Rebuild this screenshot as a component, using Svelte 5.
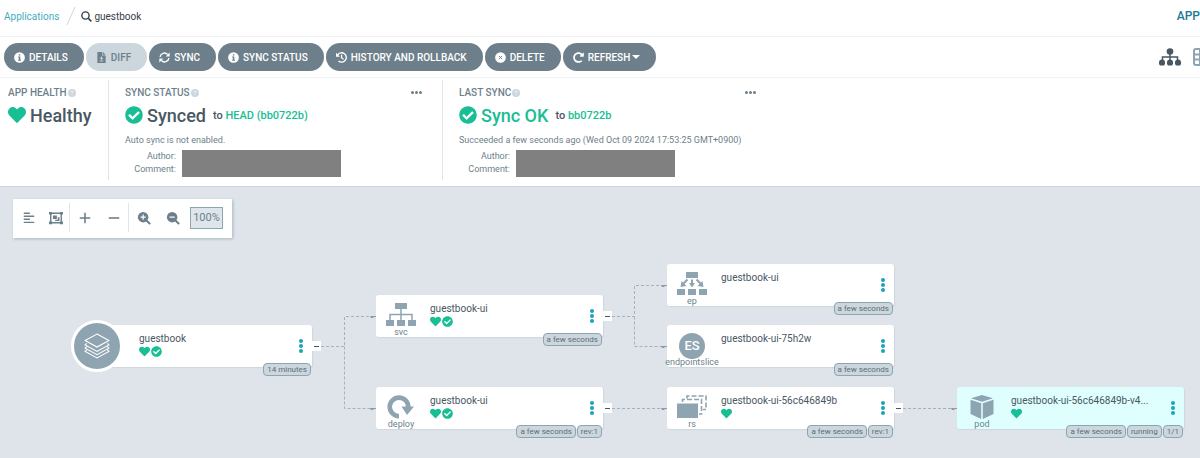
<script lang="ts">
  type Node = {
    kind: string;
    name: string;
    x: number;
    y: number;
    healthy?: boolean;
    synced?: boolean;
    expandable?: boolean;
    selected?: boolean;
    tags: string[];
  };

  const actions = [
    { icon: "info", label: "Details" },
    { icon: "diff", label: "Diff", disabled: true },
    { icon: "sync", label: "Sync" },
    { icon: "info", label: "Sync Status" },
    { icon: "history", label: "History and rollback" },
    { icon: "times", label: "Delete" },
    { icon: "redo", label: "Refresh", menu: true },
  ];

  const nodes: Node[] = [
    { kind: "app", name: "guestbook", x: 85, y: 138, healthy: true, synced: true, expandable: true, tags: ["14 minutes"] },
    { kind: "svc", name: "guestbook-ui", x: 376, y: 108, healthy: true, synced: true, expandable: true, tags: ["a few seconds"] },
    { kind: "deploy", name: "guestbook-ui", x: 376, y: 200, healthy: true, synced: true, expandable: true, tags: ["a few seconds", "rev:1"] },
    { kind: "ep", name: "guestbook-ui", x: 667, y: 77, tags: ["a few seconds"] },
    { kind: "endpointslice", name: "guestbook-ui-75h2w", x: 667, y: 138, tags: ["a few seconds"] },
    { kind: "rs", name: "guestbook-ui-56c646849b", x: 667, y: 200, healthy: true, expandable: true, tags: ["a few seconds", "rev:1"] },
    { kind: "pod", name: "guestbook-ui-56c646849b-v4...", x: 957, y: 200, healthy: true, selected: true, tags: ["a few seconds", "running", "1/1"] },
  ];

  const edges = [
    "M321 159.500H344.500V129.500H376",
    "M344.500 159.500V221.500H376",
    "M612 129.500H634.500V98.500H667",
    "M634.500 129.500V159.500H667",
    "M612 221.500H667",
    "M903 221.500H957",
  ];
  const arrows = [
    [376, 129],
    [376, 221],
    [667, 98],
    [667, 159],
    [667, 221],
    [957, 221],
  ];

  let zoom = $state("100%");
</script>

{#snippet heart()}
  <svg class="heart" viewBox="0 0 512 512" aria-label="Healthy">
    <path d="M462.300 62.600C407.500 15.900 326 24.300 275.700 76.200L256 96.500l-19.700-20.300C186.100 24.300 104.500 15.900 49.700 62.600c-62.800 53.600-66.100 149.800-9.900 207.900l193.500 199.800c12.500 12.900 32.800 12.900 45.300 0l193.500-199.800c56.300-58.100 53-154.300-9.800-207.900z" />
  </svg>
{/snippet}

{#snippet check()}
  <svg class="check" viewBox="0 0 512 512" aria-label="Synced">
    <path d="M504 256c0 137-111 248-248 248S8 393 8 256 119 8 256 8s248 111 248 248zM227.300 387.300l184-184c6.200-6.200 6.200-16.400 0-22.600l-22.600-22.600c-6.300-6.300-16.400-6.300-22.700 0L216 308.100l-70-70c-6.300-6.300-16.400-6.300-22.700 0l-22.600 22.600c-6.200 6.200-6.200 16.400 0 22.600l104 104c6.300 6.300 16.400 6.300 22.600 0z" />
  </svg>
{/snippet}

{#snippet help()}
  <svg class="help" viewBox="0 0 16 16">
    <circle cx="8" cy="8" r="8" />
    <path d="M5.500 6.200q.2-2.200 2.600-2.200 2.400 0 2.400 2 0 1.300-2.400 2.600v.8M8.100 11v1.600" fill="none" stroke="#fff" stroke-width="1.200" />
  </svg>
{/snippet}

{#snippet actionIcon(name: string)}
  {#if name === "info"}
    <svg viewBox="0 0 16 16">
      <circle cx="8" cy="8" r="7.800" />
      <path d="M7 3.200h2.200v2H7zM6 6.600h3.200v4.600h1v1.500H6v-1.500h1V8.100H6z" fill="#6d7f8b" />
    </svg>
  {:else if name === "diff"}
    <svg viewBox="0 0 16 16">
      <path d="M2 0h7v5h5v11H2zM10 0l4 4h-4z" />
      <path d="M8 6.500v5M5.500 9h5M5.500 13h5" stroke="#ccd6dd" stroke-width="1.400" />
    </svg>
  {:else if name === "sync"}
    <svg viewBox="0 0 16 16">
      <path d="M1.500 7a6.500 6.500 0 0 1 11-3.500M14.500 9a6.500 6.500 0 0 1-11 3.500" fill="none" stroke="currentColor" stroke-width="2" />
      <path d="M15.500.800V6.500H9.800zM.500 15.200V9.500h5.700z" />
    </svg>
  {:else if name === "history"}
    <svg viewBox="0 0 16 16">
      <path d="M2.500 4.200A6.800 6.800 0 1 1 3.600 13" fill="none" stroke="currentColor" stroke-width="2" />
      <path d="M0 1v5.800h5.800zM7.200 4h1.800v4l2.500 1.800-1 1.400-3.300-2.400z" />
    </svg>
  {:else if name === "times"}
    <svg viewBox="0 0 16 16">
      <circle cx="8" cy="8" r="7.800" />
      <path d="M5.800 5.800l4.400 4.400M10.200 5.800l-4.400 4.400" stroke="#6d7f8b" stroke-width="1.400" />
    </svg>
  {:else}
    <svg viewBox="0 0 512 512">
      <path d="M256.500 8c66.200.1 126.400 26.200 170.800 68.700L463 41c15.100-15.100 41-4.400 41 17v134c0 13.300-10.700 24-24 24H346c-21.400 0-32.100-25.900-17-41l41.700-41.700C339.900 104.400 300 88.400 257.500 88 165.100 87.200 87.200 162 88 257.400 88.800 348 162.200 424 256 424c41.100 0 80-14.700 110.600-41.600 4.800-4.100 12-3.900 16.400.6l39.700 39.700c4.800 4.800 4.600 12.800-.5 17.400C378.200 479.800 320 504 256 504 119 504 8 393 8 256S119.600 7.800 256.500 8z" />
    </svg>
  {/if}
{/snippet}

{#snippet kindIcon(kind: string)}
  {#if kind === "svc"}
    <svg viewBox="0 0 30 24">
      <path d="M9 0h12v6H9zM0 17h8v6H0zM11 17h8v6h-8zM22 17h8v6h-8z" />
      <path d="M15 6v11M4 17v-5.500h22V17" fill="none" stroke="currentColor" stroke-width="1.500" />
    </svg>
  {:else if kind === "ep"}
    <svg viewBox="0 0 30 24">
      <path d="M9 0h12v6H9zM0 17h8v6H0zM11 17h8v6h-8zM22 17h8v6h-8z" />
      <path d="M10.500 7.500l-4 4M15 7.500V12M19.500 7.500l4 4" fill="none" stroke="currentColor" stroke-width="2" />
      <path d="M3.500 15l1-6 5 5zM12 11h6l-3 4.500zM26.500 15l-1-6-5 5z" />
    </svg>
  {:else if kind === "deploy"}
    <svg viewBox="0 0 30 24">
      <path d="M13 21.200A9.300 9.300 0 1 1 22.300 12" fill="none" stroke="currentColor" stroke-width="4.600" />
      <path d="M15.500 11.500H28L21 20z" />
    </svg>
  {:else if kind === "rs"}
    <svg viewBox="0 0 30 24">
      <path d="M0 8.500h21V23H0z" />
      <path d="M5.500 7V4.500h19V19H22M10 3.500V1h19v13.500h-3" fill="none" stroke="currentColor" stroke-width="1.600" stroke-dasharray="5 2" />
    </svg>
  {:else if kind === "pod"}
    <svg viewBox="0 0 30 24">
      <path d="M15 0l11 3.300L15 6.800 4 3.300zM3.500 4.800l10.700 3.400V24L3.500 19zM26.500 4.800L15.800 8.200V24l10.700-5z" />
    </svg>
  {/if}
{/snippet}

<div class="page">
  <header class="breadcrumbs">
    <nav>
      <a href="#applications">Applications</a>
      <svg class="slash" viewBox="0 0 10 18"><path d="M1 18L9 0" stroke="#ccd6dd" /></svg>
      <svg class="search" viewBox="0 0 16 16">
        <circle cx="6.500" cy="6.500" r="5.300" fill="none" stroke="currentColor" stroke-width="2" />
        <path d="M10.500 10.500l4.500 4.500" stroke="currentColor" stroke-width="2.400" />
      </svg>
      <span>guestbook</span>
    </nav>
    <span class="view-title">APP</span>
  </header>

  <div class="toolbar">
    <div class="actions">
      {#each actions as action}
        <button class="action" disabled={action.disabled}>
          {@render actionIcon(action.icon)}
          <span>{action.label}</span>
          {#if action.menu}<i class="caret"></i>{/if}
        </button>
      {/each}
    </div>
    <div class="views">
      <button class="view active" aria-label="Tree">
        <svg viewBox="0 0 22 18">
          <path d="M11 4v9M3.500 13V9h15v4" fill="none" stroke="currentColor" stroke-width="1.500" />
          <circle cx="11" cy="3.500" r="3.300" />
          <path d="M0 14.500a3 3 0 0 1 6 0V16l-1 1.500H1L0 16zM8 14.500a3 3 0 0 1 6 0V16l-1 1.500H9L8 16zM16 14.500a3 3 0 0 1 6 0V16l-1 1.500h-4L16 16z" />
        </svg>
      </button>
      <button class="view" aria-label="Network">
        <svg viewBox="0 0 22 18">
          <path d="M1 3a2 2 0 0 1 2-2h16a2 2 0 0 1 2 2v12a2 2 0 0 1-2 2H3a2 2 0 0 1-2-2zM1 6.500h20M1 11.500h20M7 1v16M14 1v16" fill="none" stroke="currentColor" stroke-width="2" />
        </svg>
      </button>
    </div>
  </div>

  <section class="status">
    <div class="panel health">
      <h3>APP HEALTH{@render help()}</h3>
      <div class="value">{@render heart()}<strong>Healthy</strong></div>
    </div>
    <div class="panel">
      <h3>SYNC STATUS{@render help()}<button class="more" aria-label="Sync status details"><i></i><i></i><i></i></button></h3>
      <div class="value">
        {@render check()}<strong>Synced</strong>
        <span>to <a href="#head">HEAD (bb0722b)</a></span>
      </div>
      <p>Auto sync is not enabled.</p>
      <div class="commit">
        <div class="labels"><span>Author:</span><span>Comment:</span></div>
        <div class="redacted"></div>
      </div>
    </div>
    <div class="panel">
      <h3>LAST SYNC{@render help()}<button class="more" aria-label="Last sync details"><i></i><i></i><i></i></button></h3>
      <div class="value">
        {@render check()}<strong class="ok">Sync OK</strong>
        <span>to <a href="#revision">bb0722b</a></span>
      </div>
      <p>Succeeded a few seconds ago (Wed Oct 09 2024 17:53:25 GMT+0900)</p>
      <div class="commit">
        <div class="labels"><span>Author:</span><span>Comment:</span></div>
        <div class="redacted"></div>
      </div>
    </div>
  </section>

  <main class="graph">
    <div class="graph-tools">
      <button aria-label="Compact layout">
        <svg viewBox="0 0 16 16"><path d="M2 2.500h7M2 6h12M2 9.500h7M2 13h12" stroke="currentColor" stroke-width="1.600" /></svg>
      </button>
      <button aria-label="Group nodes">
        <svg viewBox="0 0 16 16">
          <path d="M2 2.500h12v11H2z" fill="none" stroke="currentColor" stroke-width="1.600" />
          <path d="M0 1h3.500v3H0zM12.500 1H16v3h-3.500zM0 12h3.500v3H0zM12.500 12H16v3h-3.500zM4.500 5h4.500v4H4.500zM10 7h2v4.500H7V10h3z" />
        </svg>
      </button>
      <div class="split">
        <button aria-label="Expand all">
          <svg viewBox="0 0 16 16"><path d="M8 2v12M2 8h12" stroke="currentColor" stroke-width="1.800" /></svg>
        </button>
        <button aria-label="Collapse all">
          <svg viewBox="0 0 16 16"><path d="M2 8h12" stroke="currentColor" stroke-width="1.800" /></svg>
        </button>
      </div>
      <button aria-label="Zoom in">
        <svg viewBox="0 0 16 16">
          <circle cx="7" cy="7" r="6" /><path d="M10 10l5 5" stroke="currentColor" stroke-width="2.400" />
          <path d="M7 4v6M4 7h6" stroke="#fff" stroke-width="1.400" />
        </svg>
      </button>
      <button aria-label="Zoom out">
        <svg viewBox="0 0 16 16">
          <circle cx="7" cy="7" r="6" /><path d="M10 10l5 5" stroke="currentColor" stroke-width="2.400" />
          <path d="M4 7h6" stroke="#fff" stroke-width="1.400" />
        </svg>
      </button>
      <input aria-label="Zoom level" bind:value={zoom} />
    </div>

    <svg class="edges" aria-hidden="true">
      {#each edges as d}
        <path {d} />
      {/each}
      {#each arrows as [x, y]}
        <path class="tip" d="M{x} {y}h-6l1 2h2l1-1h2z" />
      {/each}
    </svg>

    {#each nodes as node}
      <article class="node" class:selected={node.selected} style="left: {node.x}px; top: {node.y}px">
        {#if node.kind === "app"}
          <div class="app-icon">
            <svg viewBox="0 0 24 24">
              <path d="M12 1l11 6-11 6L1 7zM2.500 9.500L1 11l11 6 11-6-1.500-1.500M2.500 12.500L1 14l11 6 11-6-1.500-1.500M2.500 15.500L1 17l11 6 11-6-1.500-1.500" />
            </svg>
          </div>
        {:else}
          <div class="kind">
            {#if node.kind === "endpointslice"}
              <div class="round">ES</div>
            {:else}
              {@render kindIcon(node.kind)}
            {/if}
            <span>{node.kind}</span>
          </div>
        {/if}
        <div class="info">
          <div class="name">{node.name}</div>
          <div class="state">
            {#if node.healthy}{@render heart()}{/if}
            {#if node.synced}{@render check()}{/if}
          </div>
        </div>
        <button class="menu" aria-label="Actions for {node.name}"><i></i><i></i><i></i></button>
        {#if node.expandable}
          <button class="expander" aria-label="Collapse {node.name}"><i></i></button>
        {/if}
        <div class="tags">
          {#each node.tags as tag}
            <span>{tag}</span>
          {/each}
        </div>
      </article>
    {/each}
  </main>
</div>

<style>
  :global(body) {
    margin: 0;
  }
  .page {
    display: flex;
    flex-direction: column;
    min-height: 100vh;
    overflow: hidden;
    background: #fff;
    color: #495763;
    font-family: Roboto, "Liberation Sans", sans-serif;
    font-size: 10px;
    line-height: 13px;
  }
  svg {
    display: block;
    flex: none;
    fill: currentColor;
  }
  button {
    display: flex;
    align-items: center;
    justify-content: center;
    padding: 0;
    border: 0;
    background: none;
    color: inherit;
    font: inherit;
    cursor: pointer;
  }
  a {
    text-decoration: none;
  }

  .breadcrumbs {
    display: flex;
    align-items: center;
    justify-content: space-between;
    height: 37px;
    padding: 0 0 4px 4px;
    box-sizing: border-box;
    border-bottom: 1px solid #eff3f5;
  }
  nav {
    display: flex;
    align-items: center;
  }
  nav a {
    color: #44acbe;
  }
  nav span {
    color: #363c4a;
  }
  .slash {
    width: 10px;
    height: 18px;
    margin: 0 5px 0 7px;
  }
  .search {
    width: 11px;
    height: 11px;
    margin-right: 2px;
    color: #363c4a;
  }
  .view-title {
    color: #1b7a93;
    font-size: 12px;
    font-weight: 500;
  }

  .toolbar {
    display: flex;
    align-items: center;
    justify-content: space-between;
    height: 41px;
    padding-left: 4px;
    box-sizing: border-box;
    border-bottom: 1px solid #eff3f5;
  }
  .actions {
    display: flex;
    gap: 2px;
  }
  .action {
    height: 28px;
    padding: 0 16px 0 10px;
    gap: 4px;
    border-radius: 14px;
    background: #6d7f8b;
    color: #fff;
    font-weight: 500;
    text-transform: uppercase;
    white-space: nowrap;
  }
  .action:disabled {
    background: #ccd6dd;
    color: #6d7f8b;
  }
  .action svg {
    width: 11px;
    height: 11px;
  }
  .caret {
    margin-left: -2px;
    border: 4px solid transparent;
    border-top-color: #fff;
    border-bottom: 0;
  }
  .views {
    display: flex;
    gap: 12px;
    margin-right: -15px;
  }
  .view {
    color: #8fa4b1;
  }
  .view svg {
    width: 22px;
    height: 18px;
  }
  .view.active {
    color: #495763;
  }

  .status {
    display: flex;
    padding: 2px 0 6px;
    border-bottom: 1px solid #ccd6dd;
  }
  .panel {
    flex: 0 0 334px;
    min-height: 100px;
    padding: 6px 20px 0 16px;
    box-sizing: border-box;
  }
  .panel + .panel {
    border-left: 1px solid #dee6eb;
  }
  .panel.health {
    flex-basis: 108px;
    padding: 6px 0 0 8px;
  }
  h3 {
    display: flex;
    align-items: center;
    height: 13px;
    margin: 0 0 5px;
    color: #6d7f8b;
    font-size: 10px;
    font-weight: 500;
  }
  .help {
    width: 8px;
    height: 8px;
    margin-left: 1px;
    color: #ccd6dd;
  }
  .more {
    gap: 1px;
    margin-left: auto;
  }
  .more i {
    width: 3px;
    height: 3px;
    border-radius: 50%;
    background: #6d7f8b;
  }
  .value {
    display: flex;
    align-items: center;
    height: 22px;
  }
  .value svg {
    width: 18px;
    height: 18px;
    margin-right: 4px;
  }
  .value strong {
    font-size: 18px;
    font-weight: 500;
  }
  .value .ok,
  .value a {
    color: #18be94;
  }
  .value span {
    margin-left: 7px;
    font-size: 11px;
    font-weight: 500;
  }
  .heart,
  .check {
    color: #18be94;
  }
  p {
    margin: 8px 0 3px;
    color: #6d7f8b;
    font-size: 9px;
    line-height: 13px;
    white-space: nowrap;
  }
  .commit {
    display: flex;
    gap: 6px;
  }
  .labels {
    display: flex;
    flex-direction: column;
    width: 51px;
    color: #6d7f8b;
    font-size: 9px;
    text-align: right;
  }
  .redacted {
    width: 159px;
    height: 27px;
    background: #808080;
  }

  .graph {
    position: relative;
    flex: 1;
    min-height: 271px;
    background: #dee4ea;
  }
  .graph-tools {
    display: inline-flex;
    align-items: center;
    height: 39px;
    margin: 12px 13px;
    padding: 0 9px 2px 2px;
    box-sizing: border-box;
    background: #fff;
    color: #6d7f8b;
    box-shadow: 1px 1px 3px #a9b7c1;
  }
  .graph-tools button {
    width: 27px;
    height: 29px;
  }
  .graph-tools .split button,
  .split ~ button {
    width: 29px;
  }
  .graph-tools svg {
    width: 14px;
    height: 14px;
  }
  .split {
    display: flex;
    border: 1px solid #dee6eb;
    border-width: 0 1px;
  }
  .graph-tools input {
    width: 33px;
    height: 22px;
    margin-left: 3px;
    padding: 0;
    box-sizing: border-box;
    border: 1px solid #8fa4b1;
    background: #dee6eb;
    color: #6d7f8b;
    font: inherit;
    font-size: 11px;
    text-align: center;
  }

  .edges {
    position: absolute;
    inset: 0;
    width: 100%;
    height: 100%;
    pointer-events: none;
  }
  .edges path {
    fill: none;
    stroke: #a3b3bd;
    stroke-dasharray: 3 2;
  }
  .edges .tip {
    fill: #8f9ba3;
    stroke: none;
  }
  .node {
    position: absolute;
    display: flex;
    width: 227px;
    height: 42px;
    border-radius: 3px;
    background: #fff;
    box-shadow: 1px 1px 1px #ccd6dd;
  }
  .node.selected {
    background: #dfffff;
  }
  .app-icon {
    position: absolute;
    left: -14px;
    top: -5px;
    display: grid;
    place-items: center;
    width: 46px;
    height: 46px;
    border: 3px solid #fff;
    border-radius: 50%;
    background: #8fa4b1;
  }
  .app-icon svg {
    width: 26px;
    height: 26px;
    fill: none;
    stroke: #fff;
  }
  .app-icon + .info {
    margin-left: 54px;
  }
  .kind {
    display: flex;
    flex-direction: column;
    align-items: center;
    width: 50px;
    margin-right: 4px;
    padding-top: 8px;
    color: #8fa4b1;
  }
  .kind svg {
    width: 30px;
    height: 24px;
  }
  .kind span {
    color: #6d7f8b;
    font-size: 9px;
    line-height: 11px;
  }
  .round {
    width: 26px;
    height: 26px;
    margin-bottom: -2px;
    border-radius: 50%;
    background: #8fa4b1;
    color: #fff;
    font-size: 13px;
    font-weight: 500;
    line-height: 26px;
    text-align: center;
  }
  .info {
    flex: 1;
    min-width: 0;
    padding-top: 7px;
  }
  .name {
    white-space: nowrap;
  }
  .state {
    display: flex;
    gap: 1px;
    padding-top: 1px;
  }
  .state svg {
    width: 11px;
    height: 11px;
  }
  .menu {
    flex-direction: column;
    gap: 1px;
    width: 23px;
  }
  .menu i {
    width: 4px;
    height: 4px;
    border-radius: 50%;
    background: #1aa3b8;
  }
  .expander {
    position: absolute;
    left: 100%;
    top: 16px;
    width: 9px;
    height: 10px;
    background: #fff;
  }
  .expander i {
    width: 5px;
    height: 1px;
    background: #495763;
  }
  .tags {
    position: absolute;
    right: 1px;
    top: 38px;
    display: flex;
    gap: 1px;
  }
  .tags span {
    padding: 0 3px;
    border: 1px solid #8fa4b1;
    border-radius: 4px;
    background: #ccd6dd;
    color: #5c6d78;
    font-size: 8px;
    line-height: 11px;
    white-space: nowrap;
  }
</style>
